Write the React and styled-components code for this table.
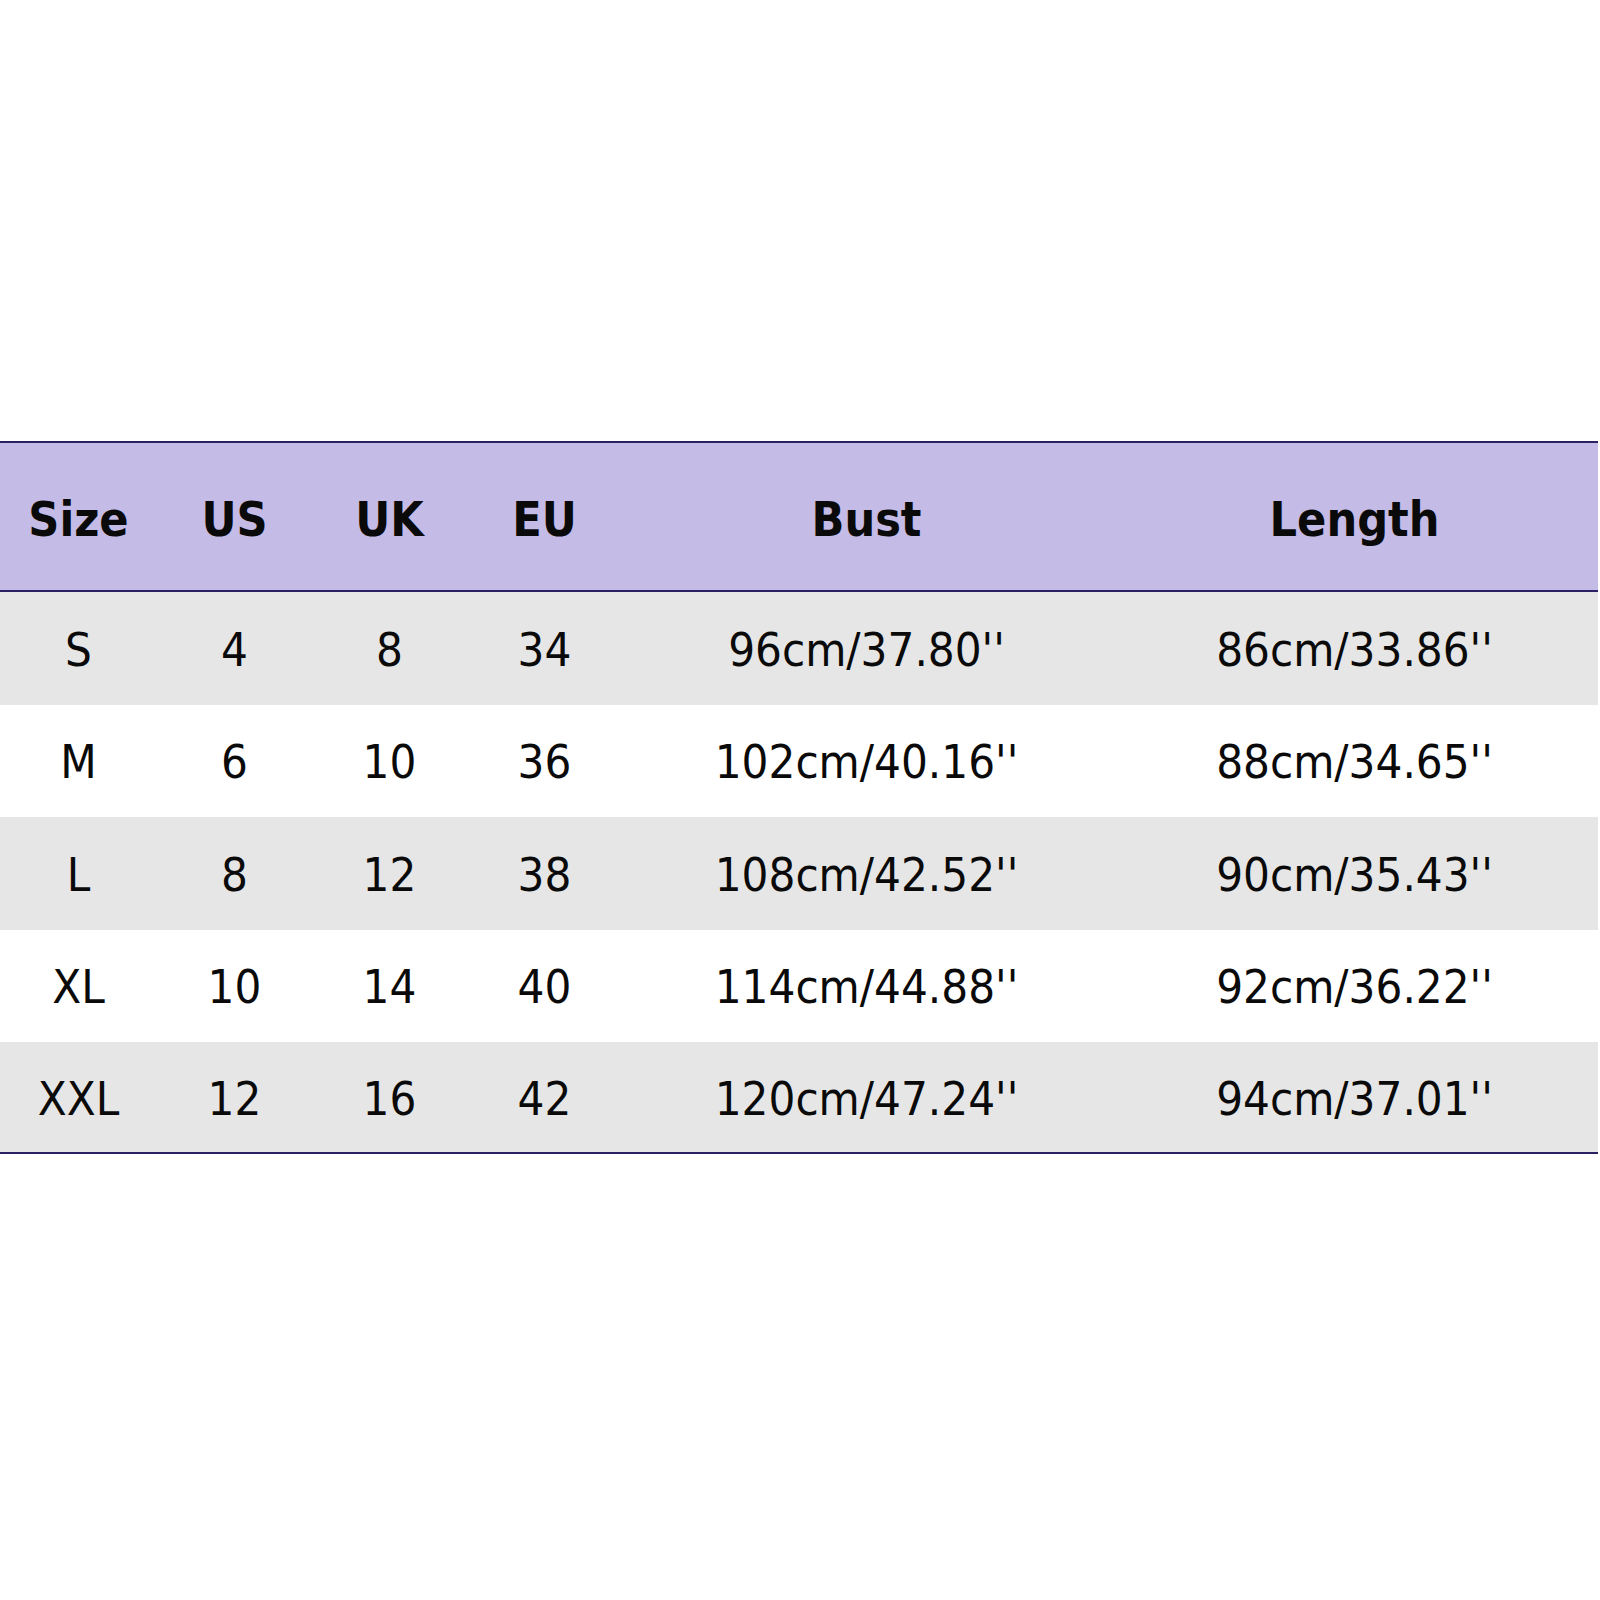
import React from "react";
import styled, { createGlobalStyle } from "styled-components";

const Global = createGlobalStyle`
  html, body { margin: 0; padding: 0; background: #ffffff; }
  body { font-family: "DejaVu Sans Condensed", "DejaVu Sans", sans-serif; }
`;

const Page = styled.div`
  width: 1600px;
  height: 1600px;
  padding-top: 441px;
  box-sizing: border-box;
  background: #ffffff;
`;

const Table = styled.div`
  width: 1598px;
  display: grid;
  grid-template-columns: 157px 155px 155px 155px 489px 487px;
  border-top: 2px solid #2a2163;
  border-bottom: 2px solid #2a2163;
`;

const HeadCell = styled.div`
  height: 149px;
  background: #c4bbe7;
  border-bottom: 2px solid #2a2163;
  display: flex;
  align-items: center;
  justify-content: center;
  font-family: "DejaVu Sans Condensed", "DejaVu Sans", sans-serif;
  font-stretch: condensed;
  font-weight: 700;
  font-size: 48px;
  color: #0a0a0a;
  padding-top: 4px;
  box-sizing: border-box;
`;

const Cell = styled.div`
  height: ${(p) => (p.$last ? 110 : 112.5)}px;
  background: ${(p) => (p.$shade ? "#e6e6e6" : "#ffffff")};
  display: flex;
  align-items: center;
  justify-content: center;
  font-family: "DejaVu Sans Condensed", "DejaVu Sans", sans-serif;
  font-stretch: condensed;
  font-weight: 400;
  font-size: 47px;
  color: #0a0a0a;
  padding-top: 2px;
  box-sizing: border-box;
`;

const headers = ["Size", "US", "UK", "EU", "Bust", "Length"];
const rows = [
  ["S", "4", "8", "34", "96cm/37.80''", "86cm/33.86''"],
  ["M", "6", "10", "36", "102cm/40.16''", "88cm/34.65''"],
  ["L", "8", "12", "38", "108cm/42.52''", "90cm/35.43''"],
  ["XL", "10", "14", "40", "114cm/44.88''", "92cm/36.22''"],
  ["XXL", "12", "16", "42", "120cm/47.24''", "94cm/37.01''"],
];

export default function App() {
  return (
    <Page>
      <Global />
      <Table>
        {headers.map((h) => (
          <HeadCell key={h}>{h}</HeadCell>
        ))}
        {rows.map((r, i) =>
          r.map((c, j) => (
            <Cell key={`${i}-${j}`} $shade={i % 2 === 0} $last={i === rows.length - 1}>
              {c}
            </Cell>
          ))
        )}
      </Table>
    </Page>
  );
}
